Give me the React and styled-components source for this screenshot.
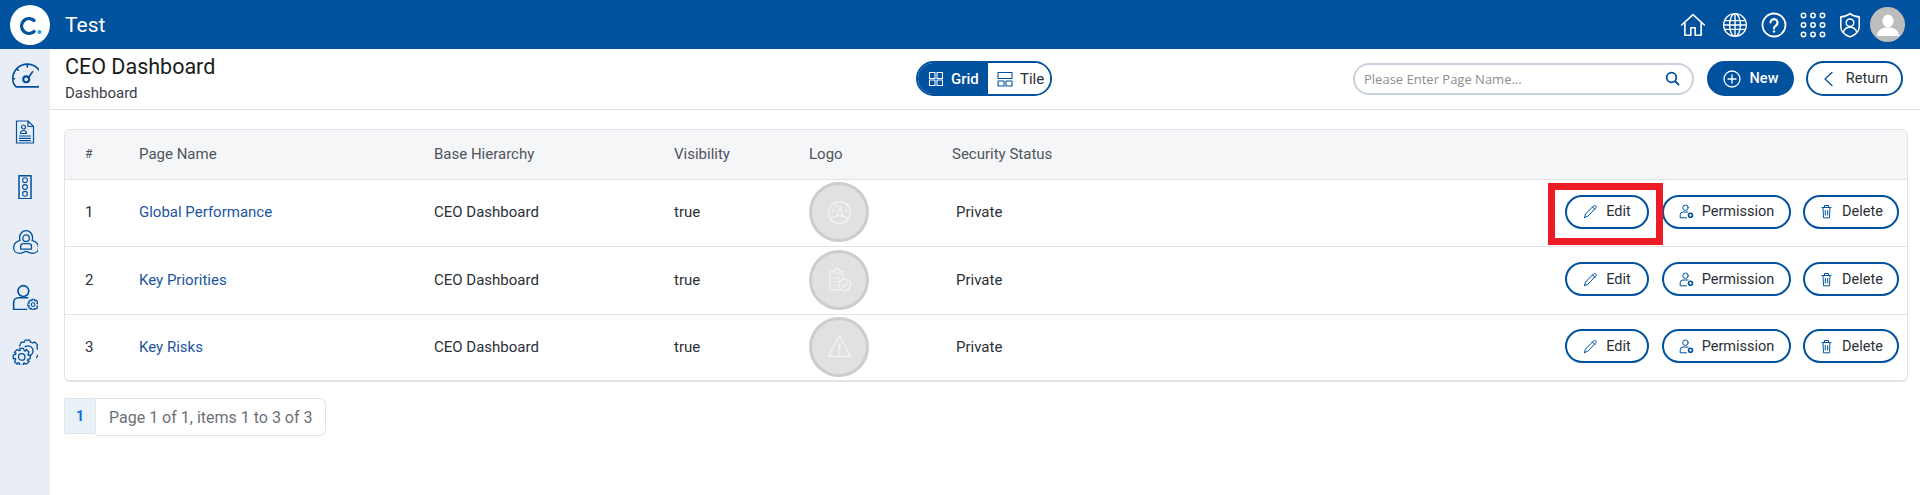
import styled, { createGlobalStyle } from 'styled-components';

const BLUE = '#00519e';
const INK = '#2b2f36';

const GlobalStyle = createGlobalStyle`
  html, body { margin: 0; padding: 0; background: #fff; }
  body { font-family: Roboto, "Liberation Sans", sans-serif; color: ${INK}; }
  * { box-sizing: border-box; }
`;

const Page = styled.div`
  width: 1920px;
  height: 495px;
  display: flex;
  flex-direction: column;
  overflow: hidden;
`;

const TopBar = styled.header`
  height: 49px;
  flex: none;
  background: ${BLUE};
  display: flex;
  align-items: center;
  padding: 0 15px 0 10px;
  color: #fff;
`;

const LogoMark = styled.div`
  width: 40px;
  height: 40px;
  border-radius: 50%;
  background: #fff;
  display: flex;
  align-items: center;
  justify-content: center;
`;

const AppName = styled.div`
  margin-left: 15px;
  font-size: 21px;
  flex: 1;
`;

const TopIcons = styled.div`
  display: flex;
  align-items: center;
`;

const IconSlot = styled.div`
  width: ${p => p.$w}px;
  display: flex;
  justify-content: center;
`;

const Avatar = styled.div`
  width: 35px;
  height: 35px;
  margin-left: 4px;
  border-radius: 50%;
  background: #bdbdbd;
  display: flex;
  align-items: center;
  justify-content: center;
`;

const Body = styled.div`
  flex: 1;
  display: flex;
  min-height: 0;
`;

const Sidebar = styled.nav`
  width: 50px;
  flex: none;
  background: #e9edf5;
  display: flex;
  flex-direction: column;
`;

const NavItem = styled.div`
  height: 55px;
  display: flex;
  align-items: center;
  justify-content: center;
`;

const Main = styled.main`
  flex: 1;
  min-width: 0;
`;

const TitleBar = styled.div`
  height: 61px;
  border-bottom: 1px solid #e2e2e2;
  display: grid;
  grid-template-columns: 1fr auto 1fr;
  align-items: center;
  padding: 0 17px 0 15px;
`;

const Titles = styled.div`
  padding-bottom: 2px;
`;

const PageTitle = styled.div`
  font-size: 21.5px;
  line-height: 24px;
  color: #1a1c20;
`;

const Crumb = styled.div`
  font-size: 15px;
  line-height: 18px;
  margin-top: 5px;
  color: #3b4048;
`;

const Toggle = styled.div`
  display: flex;
  height: 35px;
  width: 136px;
  border: 2px solid ${BLUE};
  border-radius: 18px;
  overflow: hidden;
  margin-bottom: 1px;
`;

const ToggleOption = styled.div`
  display: flex;
  align-items: center;
  gap: 7px;
  font-size: 15px;
  font-weight: ${p => (p.$active ? 500 : 400)};
  padding-left: ${p => (p.$active ? '10px' : '9px')};
  width: ${p => (p.$active ? '70px' : '62px')};
  background: ${p => (p.$active ? BLUE : '#fff')};
  color: ${p => (p.$active ? '#fff' : INK)};
`;

const Actions = styled.div`
  display: flex;
  justify-content: flex-end;
  align-items: center;
  margin-bottom: 1px;
`;

const Search = styled.div`
  width: 341px;
  height: 32px;
  border: 2px solid #c9d2de;
  border-radius: 16px;
  display: flex;
  align-items: center;
  justify-content: space-between;
  padding: 0 12px 0 9px;
  margin-right: 13px;
`;

const SearchText = styled.span`
  font-family: "Open Sans", sans-serif;
  font-size: 13px;
  color: #8f8f8f;
`;

const PillButton = styled.button`
  height: ${p => (p.$small ? '34px' : '35px')};
  width: ${p => p.$w}px;
  padding: 0;
  border: 2px solid ${BLUE};
  border-radius: 18px;
  background: ${p => (p.$solid ? BLUE : '#fff')};
  color: ${p => (p.$solid ? '#fff' : INK)};
  font-family: Roboto, sans-serif;
  font-size: 14.5px;
  font-weight: ${p => (p.$solid ? 500 : 400)};
  display: flex;
  align-items: center;
  justify-content: center;
  gap: ${p => (p.$small ? '8px' : '9px')};
  margin-left: ${p => p.$ml || 0}px;
`;

const Content = styled.div`
  padding: 19px 12px 0 14px;
`;

const TableCard = styled.div`
  border: 1px solid #e2e3e8;
  border-bottom-width: 2px;
  border-radius: 6px;
  overflow: hidden;
`;

const Row = styled.div`
  display: grid;
  grid-template-columns: 54px 295px 240px 135px 143px 1fr auto;
  align-items: center;
  height: ${p => p.$h}px;
  background: ${p => (p.$head ? '#f5f6f8' : '#fff')};
  border-bottom: ${p => (p.$last ? 0 : '1px solid #e2e3e8')};
  padding: 0 8px 2px 20px;
  font-size: 15px;
  color: ${p => (p.$head ? '#4f545c' : INK)};
`;

const HashCell = styled.div`
  font-size: ${p => (p.$head ? '12px' : '15px')};
`;

const NameLink = styled.a`
  color: #1a56a0;
`;

const LogoCircle = styled.div`
  width: 60px;
  height: 60px;
  border-radius: 50%;
  background: #e1e1e1;
  border: 3px solid #cdcdcd;
  display: flex;
  align-items: center;
  justify-content: center;
`;

const StatusCell = styled.div`
  padding-left: ${p => (p.$head ? 0 : '4px')};
`;

const RowActions = styled.div`
  display: flex;
  position: relative;
  margin-bottom: 1px;
`;

const Highlight = styled.div`
  position: absolute;
  left: -17px;
  top: -12px;
  width: 115px;
  height: 62px;
  border: 7px solid #ed1c24;
  pointer-events: none;
`;

const Pager = styled.div`
  display: flex;
  align-items: flex-start;
  margin-top: 16px;
`;

const PageNumber = styled.div`
  width: 32px;
  height: 36px;
  background: #e8f1f6;
  border: 1px solid #dfe5ea;
  color: #0a6cf0;
  font-weight: 700;
  font-size: 14px;
  display: flex;
  align-items: center;
  justify-content: center;
`;

const PageInfo = styled.div`
  height: 38px;
  width: 230px;
  border: 1px solid #e2e3e8;
  border-left: 0;
  border-radius: 0 6px 6px 0;
  font-size: 16px;
  color: #6c7178;
  display: flex;
  align-items: center;
  padding-left: 13px;
`;

const Stroke = ({ size = 24, color = BLUE, width = 1.5, box = 24, children }) => (
  <svg width={size} height={size} viewBox={`0 0 ${box} ${box}`} fill="none" stroke={color} strokeWidth={width} strokeLinecap="round" strokeLinejoin="round">
    {children}
  </svg>
);

// outline of a cog wheel, used by the settings style icons
const gearPath = (cx, cy, outer, inner, teeth) => {
  const pts = [];
  const step = (Math.PI * 2) / teeth;
  for (let i = 0; i < teeth; i++) {
    const a = i * step;
    [[-0.3, outer], [0.25, outer], [0.5, inner], [0.7, inner]].forEach(([t, r]) => {
      const ang = a + t * step;
      pts.push(`${(cx + r * Math.cos(ang)).toFixed(2)} ${(cy + r * Math.sin(ang)).toFixed(2)}`);
    });
  }
  return `M${pts.join('L')}Z`;
};

const BrandLogo = () => (
  <svg width="26" height="26" viewBox="0 0 26 26">
    <path d="M18 9.5A7.5 7.5 0 1 0 18 18.5" fill="none" stroke={BLUE} strokeWidth="3.2" />
    <circle cx="22.5" cy="20" r="2" fill="#12a9ee" />
  </svg>
);

const HomeIcon = () => (
  <Stroke color="#fff" size={26}>
    <path d="M1.5 12 12 2.5 22.5 12M4.5 10v11.5h5.5v-7h4v7h5.5V10" />
  </Stroke>
);

const GlobeIcon = () => (
  <Stroke color="#fff" size={26} width={1.3}>
    <circle cx="12" cy="12" r="10.5" />
    <ellipse cx="12" cy="12" rx="5" ry="10.5" />
    <path d="M12 1.5v21M2.5 8h19M2.5 16h19M1.5 12h21" />
  </Stroke>
);

const HelpIcon = () => (
  <svg width="26" height="26" viewBox="0 0 26 26" fill="none" stroke="#fff">
    <circle cx="13" cy="13" r="11.5" strokeWidth="1.8" />
    <path d="M9.5 10.5a3.5 3.5 0 1 1 5.5 3c-1.2.8-2 1.3-2 3" strokeWidth="2.2" strokeLinecap="round" />
    <circle cx="13" cy="19.5" r="1.2" fill="#fff" stroke="none" />
  </svg>
);

const DotsIcon = () => (
  <svg width="26" height="26" viewBox="0 0 26 26" fill="none" stroke="#fff" strokeWidth="1.5">
    {[3.5, 13, 22.5].map(y => [3.5, 13, 22.5].map(x => <circle key={`${x}-${y}`} cx={x} cy={y} r="2.2" />))}
  </svg>
);

const ShieldIcon = () => (
  <Stroke color="#fff" size={26} width={1.4}>
    <path d="M12 1.5c2.5 2 5.5 3 8.5 3v9c0 4-3.5 7.5-8.5 9.5-5-2-8.5-5.5-8.5-9.5v-9c3 0 6-1 8.5-3Z" />
    <circle cx="12" cy="10" r="3.5" />
    <path d="M6 18c1-3 3.5-4 6-4s5 1 6 4" />
  </Stroke>
);

const UserFill = () => (
  <svg width="24" height="24" viewBox="0 0 24 24" fill="#fff">
    <ellipse cx="12" cy="8" rx="5.5" ry="6.5" />
    <path d="M1 23c0-5 4-7.5 8-8.5h6c4 1 8 3.5 8 8.5Z" />
  </svg>
);

const GaugeNav = () => (
  <Stroke size={28} width={1.4}>
    <path d="M4.5 20.5h19c1.8-1.5 3-4 3-7A12.5 12.5 0 0 0 1.5 13.5c0 3 1.2 5.500 3 7Z" />
    <circle cx="13" cy="14" r="2.5" strokeWidth="1.8" />
    <path d="m15 12.5 3.500-5M14 1.5v2M5 5l1.2 1.2M1.5 13.5h1.5M25 13.5h1.5" />
  </Stroke>
);

const DocNav = () => (
  <Stroke size={24} width={1.2}>
    <path d="M15 1H3.5v22h17V6.5L15 1Zm0 0v5.500h5.500" />
    <circle cx="10.5" cy="7" r="2" />
    <path d="M7.5 13.5c0-2 1.3-3 3-3s3 1 3 3ZM6.5 16h11M6.5 18.3h11M6.5 20.6h11" />
  </Stroke>
);

const SignalNav = () => (
  <Stroke size={24} width={1.1}>
    <path d="M6 .7h12v23H6Z" strokeWidth="1.5" />
    <circle cx="12" cy="5.2" r="2.4" />
    <circle cx="12" cy="12" r="2.4" />
    <circle cx="12" cy="18.8" r="2.4" />
  </Stroke>
);

const GroupNav = () => (
  <Stroke size={26} width={1.2}>
    <path d="M13 1.5c3.5 0 6 3 6 6.5 0 1.2-.2 2-.5 2.5 3.5 1 6 3.5 6 7 0 3-2.5 5-5.5 5-2.5 0-4-1-6-2-2 1-3.5 2-6 2-3 0-5.5-2-5.5-5 0-3.5 2.5-6 6-7-.3-.5-.5-1.3-.5-2.5 0-3.5 2.5-6.5 6-6.5Z" />
    <circle cx="13" cy="8.5" r="3" />
    <path d="M8 18.5V16c0-1.5 1-2.5 2.5-2.5h5c1.5 0 2.5 1 2.5 2.5v2.5Z" />
  </Stroke>
);

const UserGearNav = () => (
  <Stroke size={26} width={1.5}>
    <circle cx="10.5" cy="6.5" r="5" />
    <path d="M14.5 12.7H6a4.5 4.5 0 0 0-4.5 4.5v6.3h12" />
    <path d={gearPath(19.5, 19, 5, 3.8, 8)} strokeWidth="1" />
    <circle cx="19.5" cy="19" r="1.7" strokeWidth="1" />
  </Stroke>
);

const GearsNav = () => (
  <Stroke size={26} width={1.2}>
    <path d={gearPath(9, 16.5, 8, 6.2, 8)} />
    <circle cx="9" cy="16.5" r="3" />
    <path d="M7 6.5 8.5 3l3-.2.8-1.8h4l.8 1.8 2 .8 1.8-.8 2.8 2.8-.8 1.8.8 2 1.8.8v4l-1.8.8-1 2" />
    <path d="M12 7c3-1.5 6-.5 7 2s0 4.5-1.5 6" />
  </Stroke>
);

const GridIcon = ({ color }) => (
  <Stroke size={16} color={color} box={16} width={1.1}>
    <path d="M1.5 1.5H7v6H1.5ZM9 1.5h5.500v6H9ZM1.5 9H7v5.500H1.5ZM9 9h5.500v5.500H9Z" />
  </Stroke>
);

const TileIcon = ({ color }) => (
  <Stroke size={16} color={color} box={16} width={1.1}>
    <path d="M1 1.5h14v6H1ZM1 10h6v5H1ZM9 10h6v5H9Z" />
  </Stroke>
);

const SearchIcon = () => (
  <Stroke size={15} box={15} width={1.8}>
    <circle cx="6.5" cy="6.5" r="4.8" />
    <path d="m10.5 10.5 3 3" />
  </Stroke>
);

const PlusIcon = () => (
  <Stroke size={18} color="#fff" box={18} width={1.3}>
    <circle cx="9" cy="9" r="8" />
    <path d="M9 5v8M5 9h8" />
  </Stroke>
);

const BackIcon = () => (
  <Stroke size={16} box={16} width={1.3}>
    <path d="m11 1.5-7 6.5 7 6.5" />
  </Stroke>
);

const PencilIcon = () => (
  <Stroke size={15} box={15} width={1}>
    <path d="M1.5 13.5 2.5 10 10.5 2c.8-.8 1.7-.8 2.3-.2s.6 1.5-.2 2.3L4.8 12.3l-3.300 1.200ZM9.5 3 12 5.500" />
  </Stroke>
);

const PersonGearIcon = () => (
  <Stroke size={15} box={15} width={1}>
    <circle cx="6.5" cy="3.7" r="2.7" />
    <path d="M9 8H4A2.8 2.8 0 0 0 1.2 10.800v3h6.300" />
    <circle cx="11.5" cy="11.3" r="2" strokeWidth="1.6" />
  </Stroke>
);

const TrashIcon = () => (
  <Stroke size={15} box={15} width={1}>
    <path d="M3 3.5h9M5.5 3.5v-2h4v2M4 3.5l.5 10.300h6L11 3.500M6.3 6.5V11M8.7 6.5V11" />
  </Stroke>
);

const GaugeLogo = () => (
  <Stroke size={25} color="#f4f4f4" width={1.1}>
    <circle cx="12" cy="12" r="10.5" />
    <path d="M3.5 18c2-1.8 5-2.8 8.5-2.8s6.500 1 8.500 2.800M9.500 15 13 6.500 14.500 15" />
    <circle cx="5.5" cy="10" r=".6" />
    <circle cx="9" cy="6" r=".6" />
    <circle cx="18.5" cy="10" r=".6" />
  </Stroke>
);

const ClipboardLogo = () => (
  <Stroke size={25} color="#f4f4f4" width={1.1}>
    <path d="M13.5 22H3V4.5h4.5M12.5 4.5H15v7M7.5 4.5c0-2 1-3 2.500-3s2.500 1 2.500 3V6h-5ZM6 10.500h1.500M6 14h1.500M6 17.500h1.500M9.500 10.500H12M9.500 14H11M9.500 17.500h2" />
    <circle cx="17" cy="17" r="5.5" />
    <path d="m14.5 17 2 2 3-3.500" />
  </Stroke>
);

const WarningLogo = () => (
  <Stroke size={25} color="#f4f4f4" width={1.1}>
    <path d="M12 2 1.2 21.5h21.6L12 2Z" />
    <path d="M12 9.5V16" strokeWidth="1.6" />
    <circle cx="12" cy="18.5" r=".5" />
  </Stroke>
);

const rows = [
  { id: 1, name: 'Global Performance', h: 67, logo: <GaugeLogo />, marked: true },
  { id: 2, name: 'Key Priorities', h: 68, logo: <ClipboardLogo /> },
  { id: 3, name: 'Key Risks', h: 65, logo: <WarningLogo />, last: true },
];

const navIcons = [GaugeNav, DocNav, SignalNav, GroupNav, UserGearNav, GearsNav];

export default function App() {
  return (
    <Page>
      <GlobalStyle />
      <TopBar>
        <LogoMark><BrandLogo /></LogoMark>
        <AppName>Test</AppName>
        <TopIcons>
          <IconSlot $w={42}><HomeIcon /></IconSlot>
          <IconSlot $w={42}><GlobeIcon /></IconSlot>
          <IconSlot $w={36}><HelpIcon /></IconSlot>
          <IconSlot $w={42}><DotsIcon /></IconSlot>
          <IconSlot $w={32}><ShieldIcon /></IconSlot>
          <Avatar><UserFill /></Avatar>
        </TopIcons>
      </TopBar>
      <Body>
        <Sidebar>
          {navIcons.map((Icon, i) => (
            <NavItem key={i}><Icon /></NavItem>
          ))}
        </Sidebar>
        <Main>
          <TitleBar>
            <Titles>
              <PageTitle>CEO Dashboard</PageTitle>
              <Crumb>Dashboard</Crumb>
            </Titles>
            <Toggle>
              <ToggleOption $active><GridIcon color="#fff" />Grid</ToggleOption>
              <ToggleOption><TileIcon color={BLUE} />Tile</ToggleOption>
            </Toggle>
            <Actions>
              <Search>
                <SearchText>Please Enter Page Name...</SearchText>
                <SearchIcon />
              </Search>
              <PillButton $solid $w={87}><PlusIcon />New</PillButton>
              <PillButton $w={97} $ml={12}><BackIcon />Return</PillButton>
            </Actions>
          </TitleBar>
          <Content>
            <TableCard>
              <Row $head $h={50}>
                <HashCell $head>#</HashCell>
                <div>Page Name</div>
                <div>Base Hierarchy</div>
                <div>Visibility</div>
                <div>Logo</div>
                <StatusCell $head>Security Status</StatusCell>
                <div />
              </Row>
              {rows.map(row => (
                <Row key={row.id} $h={row.h} $last={row.last}>
                  <HashCell>{row.id}</HashCell>
                  <NameLink>{row.name}</NameLink>
                  <div>CEO Dashboard</div>
                  <div>true</div>
                  <LogoCircle>{row.logo}</LogoCircle>
                  <StatusCell>Private</StatusCell>
                  <RowActions>
                    {row.marked && <Highlight />}
                    <PillButton $small $w={84}><PencilIcon />Edit</PillButton>
                    <PillButton $small $w={129} $ml={13}><PersonGearIcon />Permission</PillButton>
                    <PillButton $small $w={96} $ml={12}><TrashIcon />Delete</PillButton>
                  </RowActions>
                </Row>
              ))}
            </TableCard>
            <Pager>
              <PageNumber>1</PageNumber>
              <PageInfo>Page 1 of 1, items 1 to 3 of 3</PageInfo>
            </Pager>
          </Content>
        </Main>
      </Body>
    </Page>
  );
}
